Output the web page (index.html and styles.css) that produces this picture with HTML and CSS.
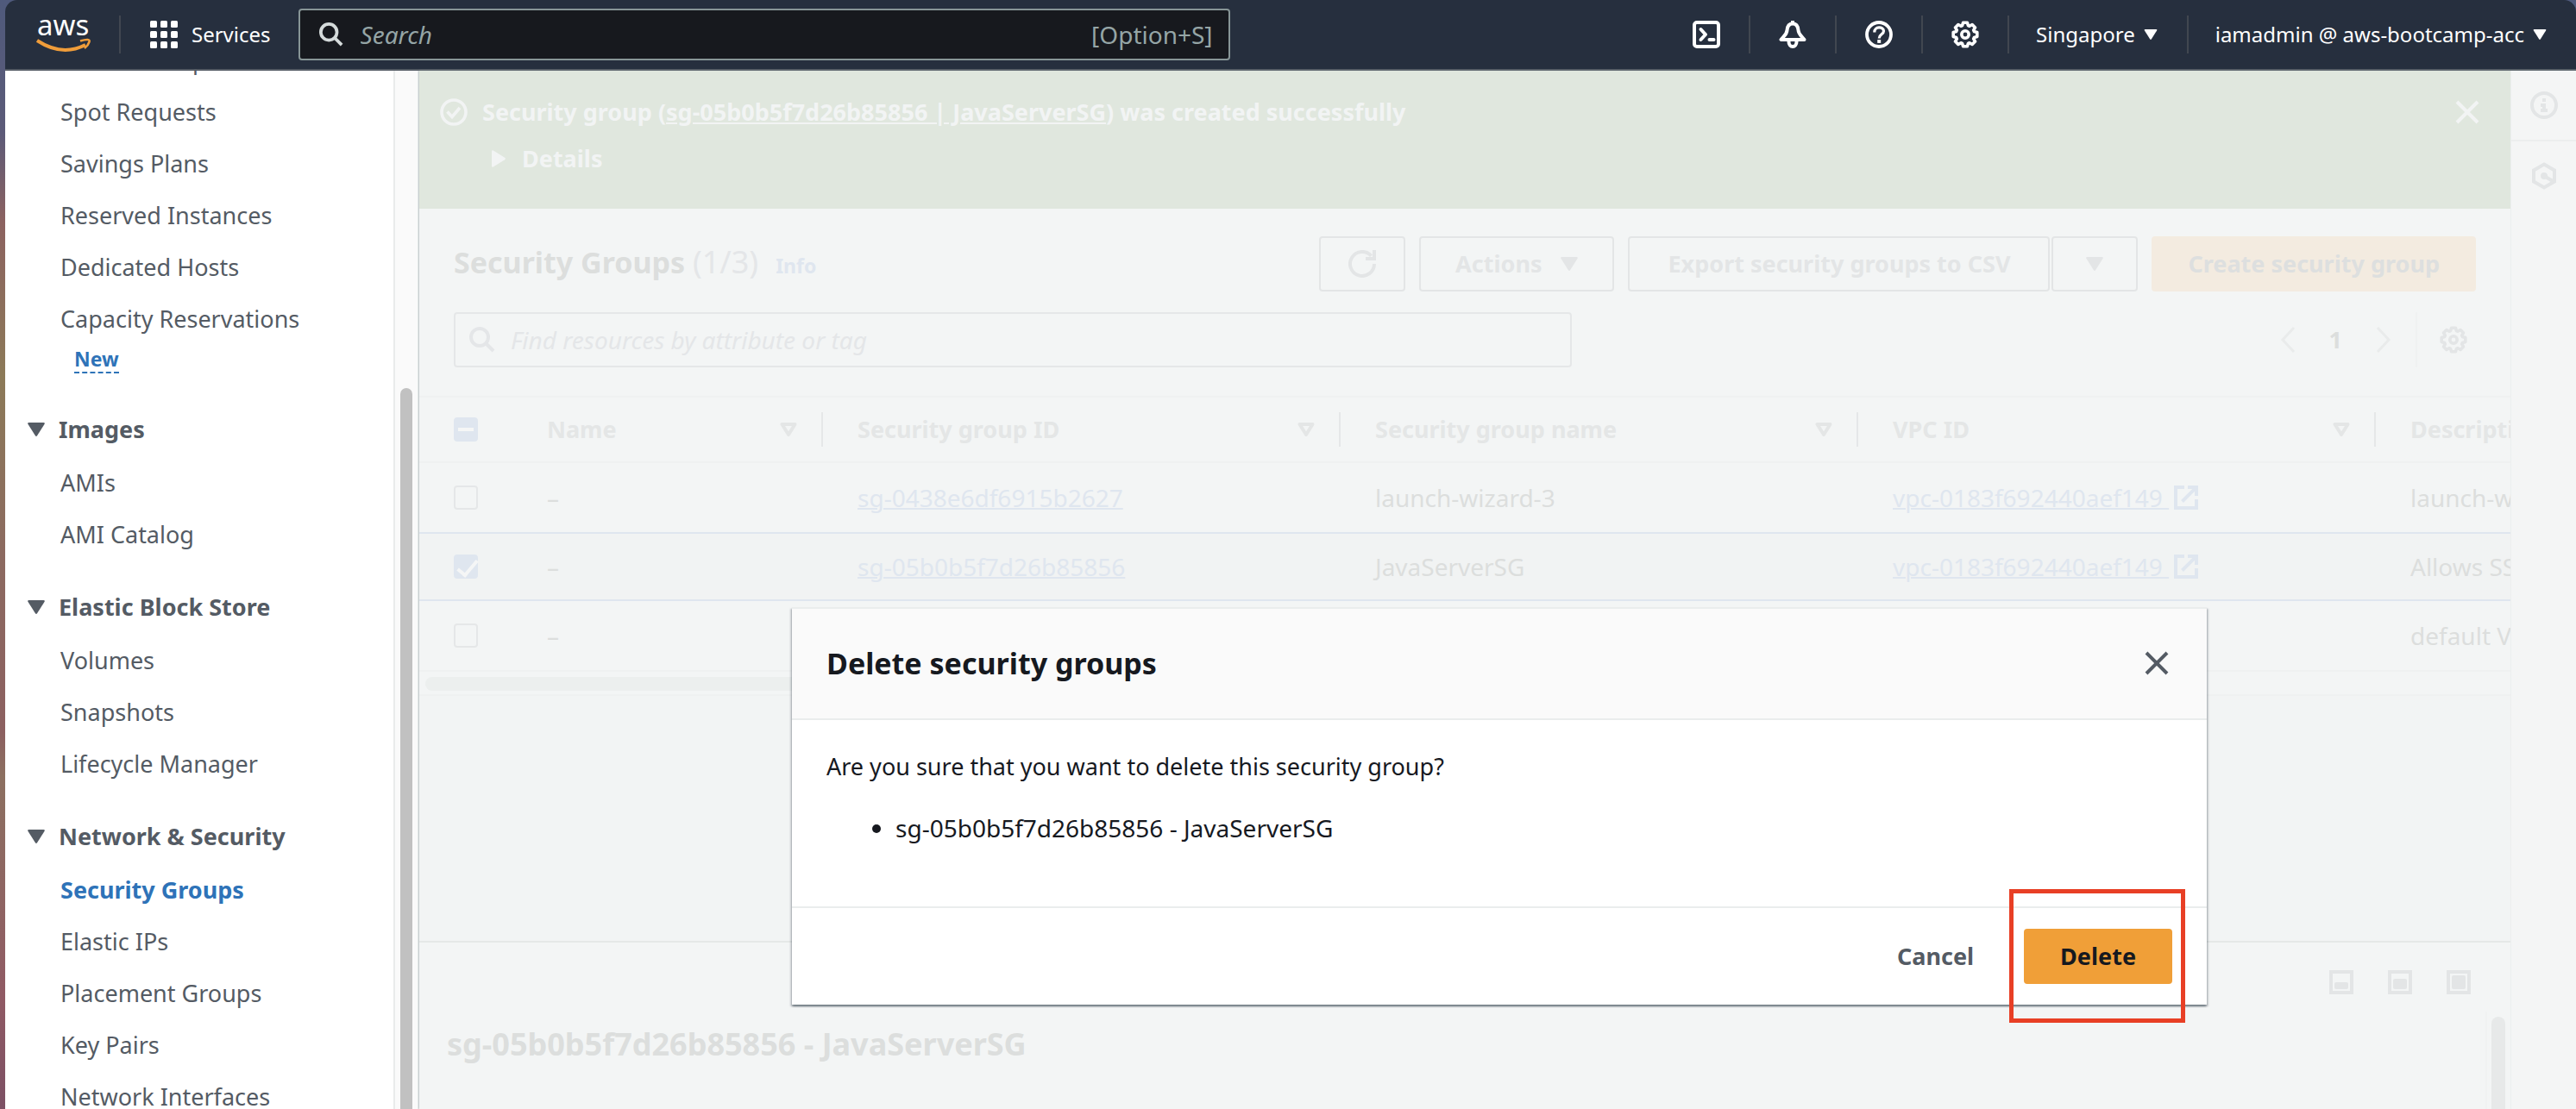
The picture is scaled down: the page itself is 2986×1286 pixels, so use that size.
FILE: index.html
```html
<!DOCTYPE html>
<html lang="en">
<head>
<meta charset="utf-8">
<title>Security Groups | EC2 | ap-southeast-1</title>
<meta name="viewport" content="width=device-width, initial-scale=1">
<link rel="stylesheet" href="styles.css">
</head>
<body>
<svg class="sprite" aria-hidden="true">
  <symbol id="caret" viewBox="0 0 20 16"><path d="M1.5 0h17Q20.400 0 19.600 1.800L11.200 15Q10 16.800 8.800 15L.4 1.800Q-.4 0 1.500 0z" fill="currentColor"/></symbol>
  <symbol id="sort" viewBox="0 0 20 16"><path d="M2.500 2h15L10 14z" fill="none" stroke="currentColor" stroke-width="4" stroke-linejoin="round"/></symbol>
  <symbol id="search" viewBox="0 0 30 30"><g fill="none" stroke="currentColor" stroke-width="4"><circle cx="12" cy="12" r="10"/><path d="M19 19l9 9"/></g></symbol>
  <symbol id="gear" viewBox="0 0 32 32"><g fill="none" stroke="currentColor" stroke-width="3.600" stroke-linejoin="round"><path d="M13.600 2.200H18.400L19.400 5.600 21 6.300 24.100 4.500 27.500 7.900 25.700 11 26.400 12.600 29.800 13.600V18.400L26.400 19.400 25.700 21 27.500 24.100 24.100 27.500 21 25.700 19.400 26.400 18.400 29.800H13.600L12.600 26.400 11 25.700 7.900 27.500 4.500 24.100 6.300 21 5.600 19.400 2.200 18.400V13.600L5.600 12.600 6.300 11 4.500 7.900 7.900 4.500 11 6.300 12.600 5.600z"/><circle cx="16" cy="16" r="4.200"/></g></symbol>
  <symbol id="close" viewBox="0 0 28 28"><path d="M2 2l24 24M26 2L2 26" fill="none" stroke="currentColor" stroke-width="4"/></symbol>
  <symbol id="external" viewBox="0 0 28 28"><g fill="none" stroke="currentColor" stroke-width="4"><path d="M12 2H2v24h24V16"/><path d="M16 2h10v10M26 2L9.500 18.500"/></g></symbol>
</svg>

<div class="window">
<header class="topbar">
  <a class="logo" href="#" aria-label="AWS home">
    <svg viewBox="0 0 64 44" width="64" height="44">
      <text class="logo-text" x="1" y="23">aws</text>
      <g fill="none" stroke="#f09d3a"><path d="M1 29Q30 48 57 34" stroke-width="4"/><path d="M51 29.500Q63 26 61.500 30.500T56 38" stroke-width="2.600"/></g>
    </svg>
  </a>
  <span class="divider"></span>
  <button class="services" type="button">
    <svg viewBox="0 0 32 32" width="32" height="32" fill="#fff"><rect width="8" height="8" rx="1.500"/><rect x="12" width="8" height="8" rx="1.500"/><rect x="24" width="8" height="8" rx="1.500"/><rect y="12" width="8" height="8" rx="1.500"/><rect x="12" y="12" width="8" height="8" rx="1.500"/><rect x="24" y="12" width="8" height="8" rx="1.500"/><rect y="24" width="8" height="8" rx="1.500"/><rect x="12" y="24" width="8" height="8" rx="1.500"/><rect x="24" y="24" width="8" height="8" rx="1.500"/></svg>
    <span>Services</span>
  </button>
  <label class="topsearch">
    <svg class="topsearch-icon" width="28" height="28"><use href="#search"/></svg>
    <input type="search" placeholder="Search" aria-label="Search">
    <span class="hint">[Option+S]</span>
  </label>
  <div class="tools">
    <button class="tool" type="button" aria-label="CloudShell">
      <svg viewBox="0 0 32 32" width="32" height="32" fill="none" stroke="currentColor" stroke-width="4" stroke-linejoin="round"><rect x="2" y="2" width="28" height="28" rx="3"/><path d="M9.500 10l5.500 6-5.500 6" stroke-linecap="round"/><path d="M19.500 22h5" stroke-linecap="round"/></svg>
    </button>
    <span class="divider"></span>
    <button class="tool" type="button" aria-label="Notifications">
      <svg viewBox="0 0 32 32" width="32" height="32" fill="none" stroke="currentColor" stroke-width="4" stroke-linejoin="round"><path d="M16 3.500C11.500 3.500 9.800 7 9.500 11 9.200 16 6 17.500 2.500 22h27C26 17.500 22.800 16 22.500 11 22.200 7 20.500 3.500 16 3.500z"/><path d="M16 0v4"/><path d="M11.500 22v2.500a4.500 5.500 0 0 0 9 0V22" /></svg>
    </button>
    <span class="divider"></span>
    <button class="tool" type="button" aria-label="Help">
      <svg viewBox="0 0 32 32" width="32" height="32" fill="none" stroke="currentColor" stroke-width="3.800"><circle cx="16" cy="16" r="14"/><path d="M10.800 13.500C10.500 6 21.500 6.500 21.500 12c0 4-5.300 3.800-5.300 8.500" stroke-width="3.200"/><path d="M14.200 24h4" /></svg>
    </button>
    <span class="divider"></span>
    <button class="tool" type="button" aria-label="Settings"><svg width="32" height="32"><use href="#gear"/></svg></button>
    <span class="divider"></span>
    <button class="tool tool-text" type="button">Singapore <svg width="16" height="12"><use href="#caret"/></svg></button>
    <span class="divider"></span>
    <button class="tool tool-text" type="button">iamadmin @ aws-bootcamp-acc <svg width="16" height="12"><use href="#caret"/></svg></button>
  </div>
</header>

<div class="workspace">
  <aside class="sidebar">
    <nav class="nav" aria-label="EC2">
      <ul class="nav-list">
        <li><a href="#">Launch Templates</a></li>
        <li><a href="#">Spot Requests</a></li>
        <li><a href="#">Savings Plans</a></li>
        <li><a href="#">Reserved Instances</a></li>
        <li><a href="#">Dedicated Hosts</a></li>
        <li><a href="#">Capacity Reservations</a><div class="new-row"><a class="new" href="#">New</a></div></li>
      </ul>
      <h2 class="nav-title"><svg width="20" height="16"><use href="#caret"/></svg>Images</h2>
      <ul class="nav-list">
        <li><a href="#">AMIs</a></li>
        <li><a href="#">AMI Catalog</a></li>
      </ul>
      <h2 class="nav-title"><svg width="20" height="16"><use href="#caret"/></svg>Elastic Block Store</h2>
      <ul class="nav-list">
        <li><a href="#">Volumes</a></li>
        <li><a href="#">Snapshots</a></li>
        <li><a href="#">Lifecycle Manager</a></li>
      </ul>
      <h2 class="nav-title"><svg width="20" height="16"><use href="#caret"/></svg>Network &amp; Security</h2>
      <ul class="nav-list">
        <li><a class="active" href="#" aria-current="page">Security Groups</a></li>
        <li><a href="#">Elastic IPs</a></li>
        <li><a href="#">Placement Groups</a></li>
        <li><a href="#">Key Pairs</a></li>
        <li><a href="#">Network Interfaces</a></li>
      </ul>
    </nav>
    <div class="nav-track"><div class="thumb"></div></div>
  </aside>

  <div class="stage">
    <main class="content">
      <section class="flash">
        <svg class="flash-icon" viewBox="0 0 32 32" width="32" height="32" fill="none" stroke="currentColor" stroke-width="3.600"><circle cx="16" cy="16" r="14"/><path d="M8.500 15.500l5.500 6 9-10.500"/></svg>
        <div class="flash-body">
          <p>Security group (<a href="#">sg-05b0b5f7d26b85856 | JavaServerSG</a>) was created successfully</p>
          <button class="details" type="button"><svg viewBox="0 0 16 20" width="16" height="20"><path d="M0 1.500Q0-.4 1.800.4L15 8.800Q16.800 10 15 11.200L1.800 19.600Q0 20.400 0 18.500z" fill="currentColor"/></svg>Details</button>
        </div>
        <button class="flash-close" type="button" aria-label="Dismiss"><svg width="28" height="28"><use href="#close"/></svg></button>
      </section>

      <section class="groups">
        <div class="head">
          <h1>Security Groups <span class="count">(1/3)</span><a class="info" href="#">Info</a></h1>
          <div class="actions">
            <button class="btn btn-icon" type="button" aria-label="Refresh"><svg viewBox="0 0 32 32" width="32" height="32" fill="none" stroke="currentColor" stroke-width="4"><path d="M30 16a14 14 0 1 1-3.500-9.300"/><path d="M30 0v10H20"/></svg></button>
            <button class="btn" type="button">Actions <svg class="btn-caret" width="20" height="16"><use href="#caret"/></svg></button>
            <div class="split">
              <button class="btn btn-export" type="button">Export security groups to CSV</button>
              <button class="btn btn-icon" type="button" aria-label="More export options"><svg width="20" height="16"><use href="#caret"/></svg></button>
            </div>
            <button class="btn btn-create" type="button">Create security group</button>
          </div>
        </div>
        <div class="filter">
          <label class="find">
            <svg width="30" height="30"><use href="#search"/></svg>
            <input type="search" placeholder="Find resources by attribute or tag" aria-label="Find resources">
          </label>
          <div class="pager">
            <button class="page-arrow" type="button" aria-label="Previous page"><svg viewBox="0 0 18 30" width="18" height="30"><path d="M16 1L3 15l13 14" fill="none" stroke="currentColor" stroke-width="3"/></svg></button>
            <span class="page">1</span>
            <button class="page-arrow" type="button" aria-label="Next page"><svg viewBox="0 0 18 30" width="18" height="30"><path d="M2 1l13 14L2 29" fill="none" stroke="currentColor" stroke-width="3"/></svg></button>
            <button class="prefs" type="button" aria-label="Preferences"><svg width="32" height="32"><use href="#gear"/></svg></button>
          </div>
        </div>
        <div class="table-wrap">
          <table class="table">
            <colgroup><col class="c-check"><col class="c-name"><col class="c-wide"><col class="c-wide"><col class="c-wide"><col class="c-wide"></colgroup>
            <thead>
              <tr>
                <th scope="col"><input class="mixed" type="checkbox" aria-label="Select all"></th>
                <th scope="col"><div class="th">Name <svg width="20" height="16"><use href="#sort"/></svg></div></th>
                <th scope="col"><div class="th">Security group ID <svg width="20" height="16"><use href="#sort"/></svg></div></th>
                <th scope="col"><div class="th">Security group name <svg width="20" height="16"><use href="#sort"/></svg></div></th>
                <th scope="col"><div class="th">VPC ID <svg width="20" height="16"><use href="#sort"/></svg></div></th>
                <th scope="col"><div class="th">Description</div></th>
              </tr>
            </thead>
            <tbody>
              <tr>
                <td><input type="checkbox" aria-label="Select launch-wizard-3"></td>
                <td>–</td>
                <td><a href="#">sg-0438e6df6915b2627</a></td>
                <td>launch-wizard-3</td>
                <td><a href="#">vpc-0183f692440aef149 <svg width="28" height="28"><use href="#external"/></svg></a></td>
                <td>launch-wizard-3 created</td>
              </tr>
              <tr class="selected">
                <td><input type="checkbox" checked aria-label="Select JavaServerSG"></td>
                <td>–</td>
                <td><a href="#">sg-05b0b5f7d26b85856</a></td>
                <td>JavaServerSG</td>
                <td><a href="#">vpc-0183f692440aef149 <svg width="28" height="28"><use href="#external"/></svg></a></td>
                <td>Allows SSH access</td>
              </tr>
              <tr>
                <td><input type="checkbox" aria-label="Select default"></td>
                <td>–</td>
                <td></td>
                <td></td>
                <td></td>
                <td>default VPC security group</td>
              </tr>
            </tbody>
          </table>
        </div>
        <div class="h-track"><div class="h-thumb"></div></div>
      </section>

      <section class="detail">
        <div class="detail-tools">
          <button type="button" aria-label="Small panel"><svg viewBox="0 0 28 28" width="28" height="28"><rect x="2" y="2" width="24" height="24" fill="none" stroke="currentColor" stroke-width="4"/><rect x="6" y="14" width="16" height="8" rx="2" fill="currentColor"/></svg></button>
          <button type="button" aria-label="Medium panel"><svg viewBox="0 0 28 28" width="28" height="28"><rect x="2" y="2" width="24" height="24" fill="none" stroke="currentColor" stroke-width="4"/><rect x="6" y="10" width="16" height="12" rx="2" fill="currentColor"/></svg></button>
          <button type="button" aria-label="Large panel"><svg viewBox="0 0 28 28" width="28" height="28"><rect x="2" y="2" width="24" height="24" fill="none" stroke="currentColor" stroke-width="4"/><rect x="6" y="6" width="16" height="16" rx="2" fill="currentColor"/></svg></button>
        </div>
        <div class="detail-body">
          <h2>sg-05b0b5f7d26b85856 - JavaServerSG</h2>
          <div class="detail-track"><div class="thumb"></div></div>
        </div>
      </section>
    </main>

    <aside class="rail">
      <button type="button" aria-label="Help panel"><svg viewBox="0 0 32 32" width="32" height="32" fill="none" stroke="currentColor" stroke-width="4"><circle cx="16" cy="16" r="14"/><path d="M14 10h4M12 16h4v6M12 22h8"/></svg></button>
      <button type="button" aria-label="Service health"><svg viewBox="0 0 32 32" width="32" height="32" fill="none" stroke="currentColor" stroke-width="4"><path d="M16 2.500L28 9.500v13L16 29.500 4 22.500v-13z"/><path d="M16 16l10 6"/><circle cx="16" cy="16" r="2.500" fill="currentColor" stroke-width="3"/></svg></button>
    </aside>

    <div class="overlay">
      <div class="modal" role="dialog" aria-modal="true" aria-labelledby="modal-title">
        <div class="modal-head">
          <h2 id="modal-title">Delete security groups</h2>
          <button type="button" aria-label="Close"><svg width="28" height="28"><use href="#close"/></svg></button>
        </div>
        <div class="modal-body">
          <p>Are you sure that you want to delete this security group?</p>
          <ul><li>sg-05b0b5f7d26b85856 - JavaServerSG</li></ul>
        </div>
        <div class="modal-foot">
          <button class="cancel" type="button">Cancel</button>
          <div class="marked"><button class="delete" type="button">Delete</button></div>
        </div>
      </div>
    </div>
  </div>
</div>
</div>
</body>
</html>
```
FILE: styles.css
```css
* { box-sizing: border-box; }

html, body { height: 100%; }

body {
  margin: 0;
  padding-left: 6px;
  overflow: hidden;
  background: linear-gradient(#4f5a7c 0%, #5c5a78 12%, #8c6260 20%, #8c7a58 34%, #8c6a60 50%, #8c6060 66%, #8c7060 70%, #905a64 90%, #7c5064 100%);
  font: 27px/40px "Noto Sans", "Open Sans", sans-serif;
  color: #16191f;
}

button, input { font: inherit; color: inherit; }
button { margin: 0; padding: 0; border: 0; background: none; display: flex; align-items: center; white-space: nowrap; }
h1, h2, p, ul { margin: 0; padding: 0; }
ul { list-style: none; }
svg { display: block; flex: none; }
a { color: inherit; text-decoration: none; }
.sprite { position: absolute; width: 0; height: 0; }

.window { height: 100%; display: flex; flex-direction: column; }

/* Top bar */
.topbar {
  flex: none;
  display: flex;
  align-items: center;
  height: 82px;
  padding-left: 36px;
  background: #262f3e;
  border-bottom: 2px solid #545b64;
  border-radius: 14px 14px 0 0;
  color: #fff;
  font-size: 24px;
}
.logo { margin-right: 32px; }
.logo svg { overflow: visible; }
.logo-text { font: 33px "Noto Sans", sans-serif; fill: #fff; }
.divider { flex: none; width: 2px; height: 44px; background: #414750; }
.services { padding: 0 32px 0 34px; gap: 16px; height: 80px; }
.topsearch {
  flex: 0 1 1080px;
  display: flex;
  align-items: center;
  height: 60px;
  padding: 0 18px 0 22px;
  border: 2px solid #879596;
  border-radius: 4px;
  background: #17191e;
  color: #95a5a6;
  font-size: 28px;
}
.topsearch-icon { color: #d5dbdb; margin-right: 20px; }
.topsearch input { flex: 1; min-width: 0; padding: 0; border: 0; background: none; outline: 0; appearance: none; }
.topsearch input::placeholder { color: #95a5a6; font-style: italic; opacity: 1; }
.tools { margin-left: auto; display: flex; align-items: center; }
.tool { height: 80px; padding: 0 33px; }
.tool-text { gap: 10px; padding: 0 34px 0 31px; }

.workspace { flex: 1; min-height: 0; display: flex; }

/* Navigation */
.sidebar { flex: 0 0 480px; display: flex; overflow: hidden; background: #fff; }
.nav { flex: 1; margin-top: -42px; color: #545b64; }
.nav-list li { padding-left: 64px; line-height: 60px; white-space: nowrap; }
.active { color: #2e73b8; font-weight: 700; }
.new-row { height: 44px; padding-left: 16px; line-height: 30px; }
.new { display: inline-block; font-size: 23px; font-weight: 700; color: #2e73b8; border-bottom: 2px dashed #2e73b8; }
.nav-title { display: flex; align-items: center; gap: 16px; margin: 24px 0 2px; padding-left: 26px; font-size: 27px; line-height: 60px; }
.nav-track { flex: 0 0 30px; padding: 368px 6px 0; background: #fafafa; border-left: 2px solid #e9ebeb; border-right: 2px solid #ecefef; }
.thumb { height: 100%; border-radius: 8px 8px 0 0; background: #c1c1c1; }

/* Dimmed console behind the dialog */
.stage { position: relative; flex: 1; min-width: 0; display: flex; overflow: hidden; background: #f2f4f4; box-shadow: 0 0 2px #7d8a8c; color: #dcdedd; }
.content { flex: 1; min-width: 0; display: flex; flex-direction: column; }

.flash { flex: none; display: flex; min-height: 160px; padding: 28px 36px 0 24px; background: #e0e7de; color: #f2f4f4; font-weight: 700; box-shadow: 0 2px 2px #e9ecec; }
.flash-icon { margin: 4px 17px 0 0; }
.flash-body { flex: 1; }
.flash a { text-decoration: underline; }
.details { gap: 19px; margin-top: 14px; padding-left: 11px; font-weight: 700; }
.flash-close { align-self: flex-start; margin-top: 6px; }

.groups { background: #f3f5f5; }
.head { display: flex; justify-content: space-between; align-items: center; padding: 32px 40px 24px; }
.head h1 { font-size: 34px; line-height: 48px; white-space: nowrap; }
.count { font-size: 36px; font-weight: 400; color: #e4e6e8; }
.info { margin-left: 20px; font-size: 23px; color: #dfe6ef; }
.actions { display: flex; gap: 16px; }
.split { display: flex; gap: 2px; }
.btn { justify-content: center; height: 64px; padding: 0 40px; border: 2px solid #e3e5e6; border-radius: 4px; color: #e3e5e6; font-weight: 700; }
.btn-export { padding: 0 44px; }
.btn-icon { width: 100px; padding: 0; }
.btn-caret { margin-left: 22px; }
.btn-create { border-color: #f3ebe0; background: #f3ebe0; color: #dddfdf; }

.filter { display: flex; justify-content: space-between; padding: 0 40px 33px; }
.find { flex: 0 1 1296px; display: flex; align-items: center; gap: 18px; height: 64px; padding: 0 16px; border: 2px solid #e5e7e8; border-radius: 4px; color: #e4e6e8; font-size: 28px; }
.find input { flex: 1; min-width: 0; padding: 0; border: 0; background: none; outline: 0; appearance: none; }
.find input::placeholder { color: #e4e6e8; font-style: italic; opacity: 1; }
.pager { display: flex; align-items: center; }
.page-arrow { color: #e9ebeb; }
.page { padding: 0 39px; font-weight: 700; }
.prefs { height: 64px; margin-left: 28px; padding: 0 10px 0 26px; border-left: 2px solid #eff1f1; color: #e3e5e6; }

.table-wrap { overflow: hidden; border-top: 2px solid #eff1f1; }
.table { width: 2868px; table-layout: fixed; border-spacing: 0; text-align: left; white-space: nowrap; }
.c-check { width: 108px; }
.c-name { width: 360px; }
.c-wide { width: 600px; }
.table th { height: 76px; padding: 0; border-bottom: 2px solid #eff1f1; color: #e4e6e6; }
.th { display: flex; align-items: center; justify-content: space-between; padding: 0 28px 0 40px; border-right: 2px solid #e5e7e8; }
.table th:first-child, .table td:first-child { padding-left: 40px; }
.table td { height: 82px; padding: 0 0 0 40px; border-bottom: 2px solid #dfe6ef; font-size: 28px; }
.table tr:last-child td { border-bottom-color: #eff1f1; }
.table .selected td { height: 78px; background: #f1f3f3; }
.table a { color: #dfe6ef; text-decoration: underline; text-decoration-thickness: 2px; }
.table a svg { display: inline-block; margin-left: 6px; vertical-align: -3px; }
.table input { appearance: none; display: block; width: 28px; height: 28px; margin: 0; border: 2px solid #e5e7e8; border-radius: 4px; }
.table input.mixed, .table input:checked { border-color: #dfe6ef; background: #dfe6ef; }
.table input.mixed::before { content: ""; display: block; width: 18px; height: 4px; margin: 10px 3px; background: #f5f6f6; }
.table input:checked::before { content: ""; display: block; width: 20px; height: 9px; margin: 5px 2px; border: solid #f5f6f6; border-width: 0 0 4px 4px; transform: rotate(-50deg); }
.h-track { height: 28px; padding: 6px 1050px 6px 7px; border-bottom: 2px solid #eff1f1; }
.h-thumb { height: 16px; border-radius: 8px; background: #ecefee; }

.detail { margin-top: auto; flex: 0 0 195px; display: flex; flex-direction: column; border-top: 2px solid #e5e8e7; background: #f3f5f5; }
.detail-tools { display: flex; justify-content: flex-end; gap: 40px; height: 80px; padding: 32px 46px 0 0; align-items: flex-start; color: #e3e5e6; }
.detail-body { flex: 1; display: flex; justify-content: space-between; }
.detail h2 { padding: 14px 0 0 32px; font-size: 36px; line-height: 48px; }
.detail-track { flex: 0 0 29px; padding: 6px 6px 0 5px; border-left: 2px solid #f0f2f2; }
.detail .thumb { background: #e7e9e9; }

.rail { flex: 0 0 76px; background: #f4f5f5; border-left: 1px solid #eceeee; color: #e3e5e6; }
.rail button { width: 100%; height: 82px; justify-content: center; align-items: flex-end; }
.rail button:first-child { padding-bottom: 24px; border-bottom: 2px solid #eceeee; }
.rail button + button { padding-bottom: 26px; }

/* Dialog */
.overlay { position: absolute; inset: 0; display: flex; justify-content: center; align-items: flex-start; padding: 622px 0 0 4px; color: #16191f; }
.modal { flex: 0 1 1640px; background: #fff; border-top: 2px solid #eaeded; box-shadow: 0 2px 2px rgba(0, 20, 36, .4), 2px 2px 2px rgba(0, 20, 36, .15), -2px 2px 2px rgba(0, 20, 36, .15); }
.modal-head { display: flex; justify-content: space-between; align-items: center; height: 129px; padding: 0 44px 2px 40px; background: #fafafa; border-bottom: 2px solid #eaeded; color: #545b64; }
.modal-head h2 { font-size: 34px; line-height: 48px; color: #16191f; }
.modal-body { padding: 34px 40px 71px; }
.modal-body ul { margin-top: 31px; padding-left: 80px; list-style: disc; font-size: 28px; }
.modal-foot { display: flex; justify-content: flex-end; align-items: center; height: 114px; padding: 0 40px; border-top: 2px solid #eaeded; }
.cancel, .delete { height: 64px; font-weight: 700; }
.cancel { margin-right: 58px; color: #545b64; }
.delete { padding: 0 42px; border-radius: 4px; background: #f09f38; }
.marked { position: relative; }
.marked::after { content: ""; position: absolute; inset: -46px -15px -45px -17px; border: 5px solid #e83f25; pointer-events: none; }
```
